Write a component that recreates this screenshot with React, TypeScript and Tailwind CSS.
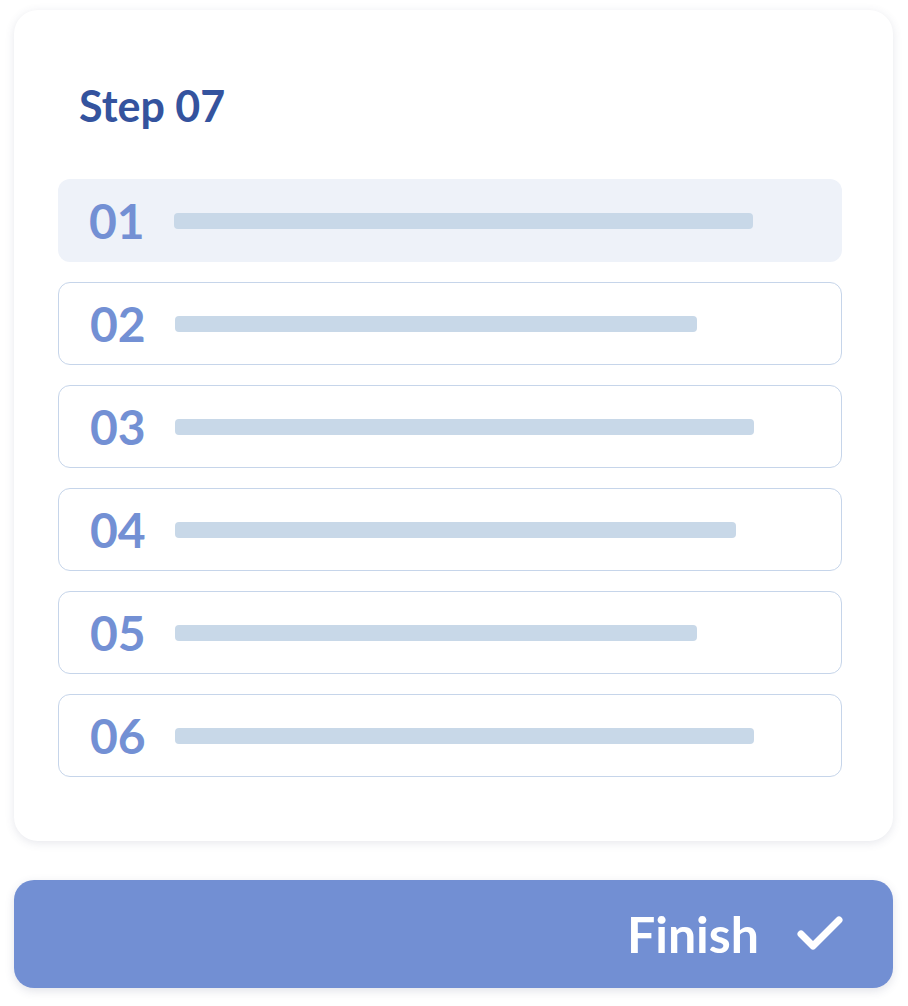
import React from 'react';

const rows = [
  { n: '01', w: 579, active: true },
  { n: '02', w: 522 },
  { n: '03', w: 579 },
  { n: '04', w: 561 },
  { n: '05', w: 522 },
  { n: '06', w: 579 },
];

function App() {
  return (
    <div className="min-h-screen bg-white pl-[14px] pr-[15px] pt-[10px] font-['Lato',sans-serif]">
      <div className="rounded-[24px] bg-white shadow-[0_2px_10px_rgba(60,70,110,0.13)] pl-[44px] pr-[51px] pt-[68px] pb-[64px]">
        <h1 className="pl-[21px] text-[43px] leading-[56px] font-bold text-[#34539e]">Step 07</h1>
        <div className="mt-[45px] flex flex-col gap-[20px]">
          {rows.map((r) => (
            <div
              key={r.n}
              className={
                'flex h-[83px] items-center rounded-[12px] pl-[31px] ' +
                (r.active ? 'bg-[#eef2f9]' : 'border-[1.5px] border-[#c6d5ea]')
              }
            >
              <span className="w-[85px] text-[48px] leading-none font-bold text-[#7390d4]">{r.n}</span>
              <div className="h-[16px] rounded-[4px] bg-[#c8d8e8]" style={{ width: r.w }} />
            </div>
          ))}
        </div>
      </div>
      <button className="mt-[39px] flex h-[108px] w-full items-center justify-end gap-[38px] rounded-[20px] bg-[#728fd3] pr-[50px] shadow-[0_3px_10px_rgba(60,70,110,0.15)]">
        <span className="text-[50px] font-bold text-white">Finish</span>
        <svg width="46" height="36" viewBox="0 0 46 36" fill="none">
          <polyline points="4,18 16,30 42,4" stroke="white" strokeWidth="7" strokeLinecap="round" strokeLinejoin="round" />
        </svg>
      </button>
    </div>
  );
}

export default App;
